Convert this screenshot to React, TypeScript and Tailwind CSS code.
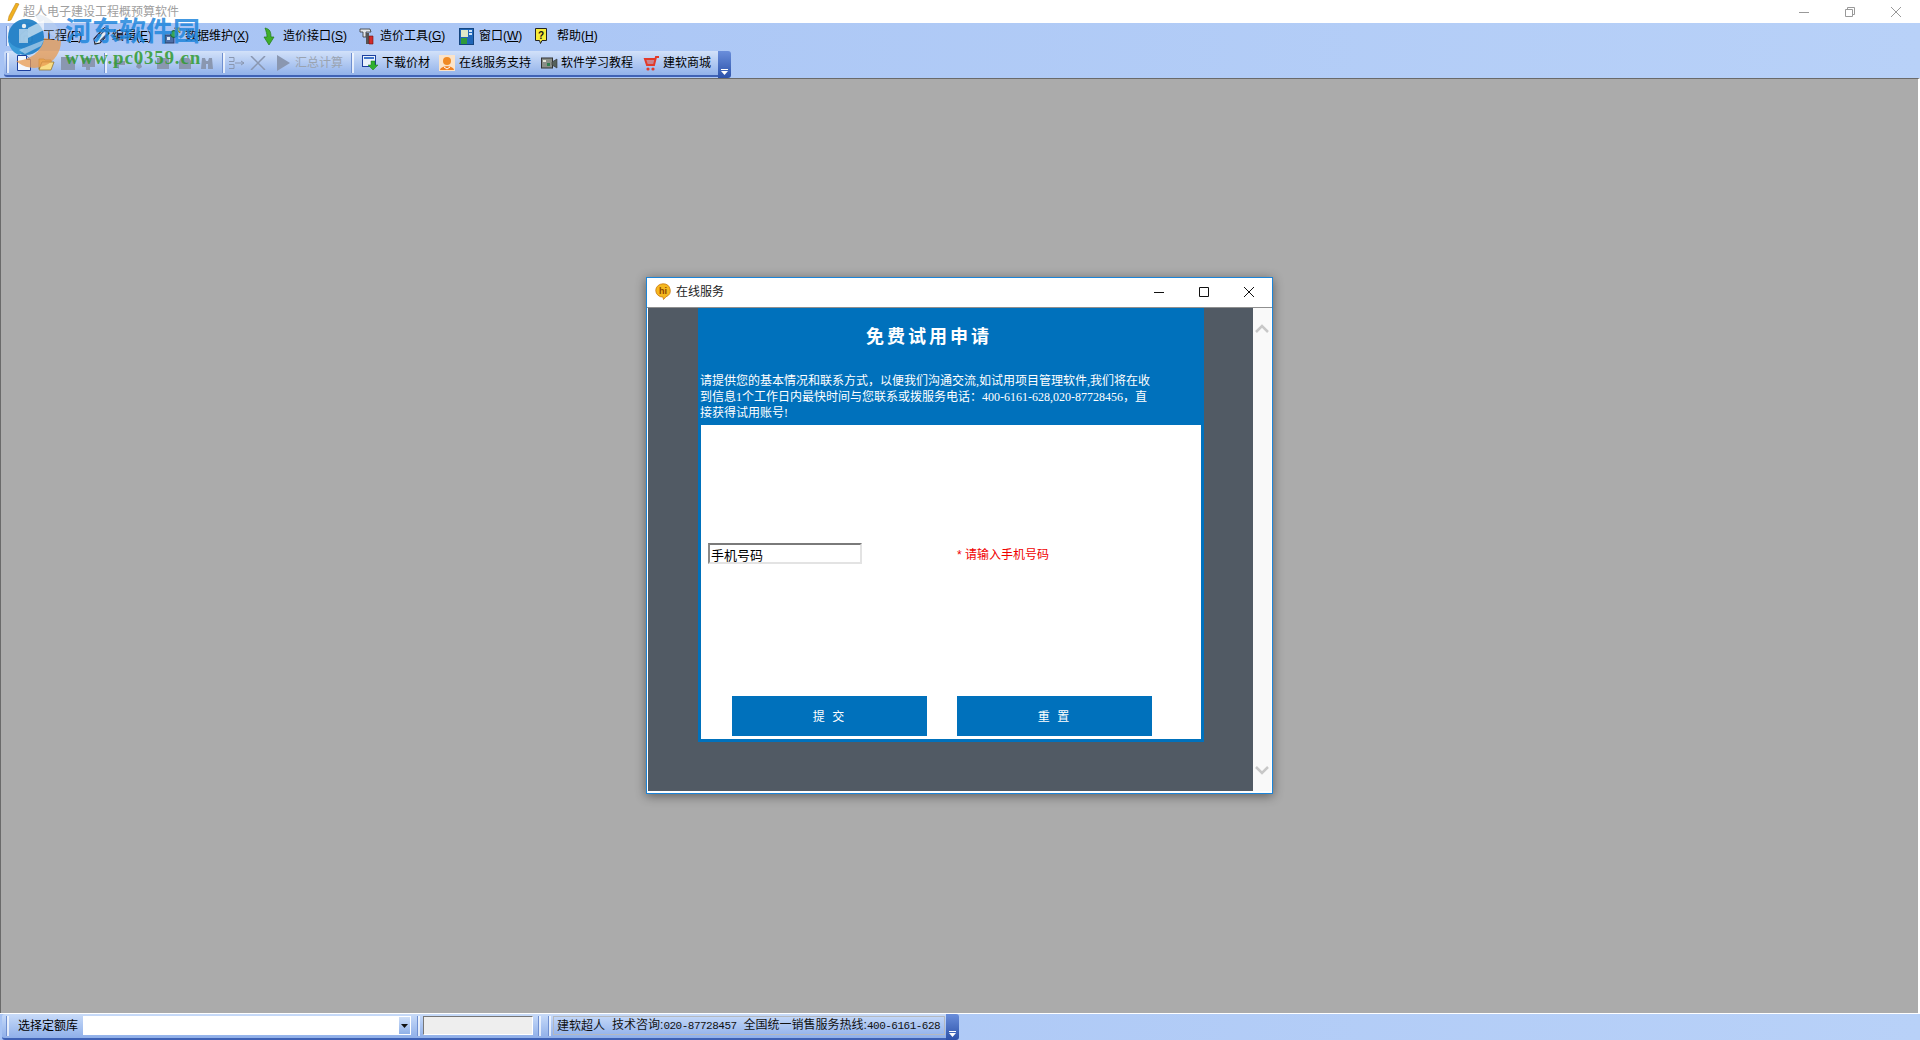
import type { ReactNode } from 'react';

const MENU_W = 'flex items-center h-full shrink-0';

// 메뉴 항목 하나 (아이콘 + 라벨, 단축키 글자에 밑줄)
function MenuItem({ width, gap, icon, label, hot }: { width: string; gap: string; icon: ReactNode; label: string; hot: string }) {
  return (
    <div className={`${MENU_W} ${width}`}>
      <div className={`flex items-center ${gap}`}>{icon}</div>
      <span className="whitespace-nowrap">
        {label}(<span className="underline">{hot}</span>)
      </span>
    </div>
  );
}

function Sep({ className = '' }: { className?: string }) {
  return <div className={`w-[3px] h-[20px] shrink-0 border-l border-[#6f8fd0] bg-white/70 ${className}`} />;
}

function Chevron() {
  return (
    <div className="w-[13px] h-full shrink-0 rounded-r-[3px] bg-gradient-to-b from-[#6a8edb] to-[#2d52aa] flex flex-col items-center justify-end pb-[3px] gap-[1px]">
      <div className="w-[7px] h-[1px] bg-white" />
      <svg width="7" height="4" viewBox="0 0 7 4"><path d="M0 0h7L3.5 4z" fill="#fff" /></svg>
    </div>
  );
}

function IconDoc() {
  return (
    <svg width="18" height="18" viewBox="0 0 18 18">
      <path d="M3 8l6-5 6 5v7H3z" fill="#e6edf5" stroke="#55708f" />
      <path d="M7 9h4v6H7z" fill="#fff" stroke="#7d8ea3" />
    </svg>
  );
}
function IconEdit() {
  return (
    <svg width="20" height="20" viewBox="0 0 20 20">
      <path d="M2 13l9-10 6 4-9 10-5 1z" fill="#e8eef5" stroke="#222" strokeWidth="1.200" />
      <path d="M5 12l7-7M8 15l7-7" stroke="#3c5580" strokeWidth="1.200" />
      <path d="M13 1l5 3-2 2-5-3z" fill="#8aa0c0" stroke="#222" strokeWidth=".7" />
    </svg>
  );
}
function IconData() {
  return (
    <svg width="18" height="18" viewBox="0 0 18 18">
      <rect x="2" y="8" width="9" height="8" fill="#4d6fa8" stroke="#2a3d66" />
      <circle cx="11" cy="7" r="3.500" fill="#3aa655" stroke="#1d5c2e" />
      <path d="M11 1h6v5z" fill="#efc93c" stroke="#6b5a14" strokeWidth=".6" />
      <rect x="4" y="10" width="3" height="3" fill="#d9e6f5" />
    </svg>
  );
}
function IconArrow() {
  return (
    <svg width="14" height="19" viewBox="0 0 14 19">
      <path d="M3 1c5 1 6 4 6 9h3l-5 8-5-8h3c0-3-1-6-2-9z" fill="#3fae2a" stroke="#1f7a18" strokeWidth=".7" />
    </svg>
  );
}
function IconTool() {
  return (
    <svg width="16" height="18" viewBox="0 0 16 18">
      <path d="M1 2h10l1 3H7v5H4V5H1z" fill="#e2e6ea" stroke="#333" strokeWidth=".8" />
      <path d="M7 6h3v11H7z" fill="#555" />
      <path d="M10 9h4v8h-4z" fill="#d22b2b" stroke="#6b1111" strokeWidth=".6" />
    </svg>
  );
}
function IconWindow() {
  return (
    <svg width="15" height="17" viewBox="0 0 15 17">
      <rect x=".5" y=".5" width="14" height="16" fill="#1f66b8" stroke="#14457f" />
      <rect x="2" y="2" width="7" height="7" fill="#dfe9c8" />
      <rect x="2" y="10" width="6" height="6" fill="#2f9a3a" />
      <rect x="10" y="2" width="3" height="2" fill="#cfe3f8" />
      <rect x="10" y="5" width="3" height="2" fill="#cfe3f8" />
    </svg>
  );
}
function IconHelp() {
  return (
    <svg width="12" height="17" viewBox="0 0 12 17">
      <path d="M.5.5h11v12H7l-1.500 3-1-3h-4z" fill="#f6ec3a" stroke="#222" />
      <text x="6" y="10.500" textAnchor="middle" fontSize="10" fontWeight="700" fill="#111" fontFamily="Liberation Sans">?</text>
    </svg>
  );
}

function IconNew() {
  return (
    <svg width="14" height="16" viewBox="0 0 14 16">
      <path d="M.5.5h9l4 4v11H.5z" fill="#f4f8ff" stroke="#1c3f9e" />
      <path d="M9.500.5v4h4" fill="#bcd0f2" stroke="#1c3f9e" />
    </svg>
  );
}
function IconOpen() {
  return (
    <svg width="17" height="15" viewBox="0 0 17 15">
      <path d="M1 3h5l1 1h6v2H4L1 13z" fill="#f3c858" stroke="#8a6a1e" strokeWidth=".7" />
      <path d="M4 6h12l-3 8H1z" fill="#f9dd86" stroke="#8a6a1e" strokeWidth=".7" />
    </svg>
  );
}
function Disabled({ d, w = 14 }: { d: string; w?: number }) {
  return (
    <svg width={w} height="15" viewBox={`0 0 ${w} 15`} className="shrink-0">
      <path d={d} fill="#8a97b0" />
    </svg>
  );
}
function IconDownload() {
  return (
    <svg width="17" height="16" viewBox="0 0 17 16">
      <rect x=".5" y=".5" width="13" height="11" fill="#eaf2fb" stroke="#1c3f9e" />
      <rect x="2" y="2" width="10" height="2" fill="#3f74c9" />
      <path d="M9 6h4v4h3l-5 5-5-5h3z" fill="#2fb02f" stroke="#1a7a1a" strokeWidth=".5" />
    </svg>
  );
}
function IconSupport() {
  return (
    <svg width="16" height="16" viewBox="0 0 16 16">
      <rect width="16" height="16" fill="#fbe3c8" />
      <circle cx="8" cy="6" r="4" fill="#f08a24" />
      <path d="M1 15c1-5 13-5 14 0z" fill="#ef7f1f" />
      <path d="M5 12l3 2 3-2" stroke="#fff" fill="none" />
    </svg>
  );
}
function IconCamera() {
  return (
    <svg width="17" height="13" viewBox="0 0 17 13">
      <rect x=".5" y="1" width="11" height="10" fill="#8a8f88" stroke="#333" />
      <path d="M11 5l5-3v9l-5-3z" fill="#55605a" stroke="#333" strokeWidth=".6" />
      <rect x="2" y="3" width="3" height="2" fill="#e5e5d8" />
      <rect x="6" y="6" width="3" height="3" fill="#2f7f4f" />
    </svg>
  );
}
function IconCart() {
  return (
    <svg width="17" height="15" viewBox="0 0 17 15">
      <path d="M16 1h-3l-2 8H4L2 3h10" fill="none" stroke="#e23a2a" strokeWidth="2" />
      <path d="M3 5h9M4 7h8" stroke="#e23a2a" />
      <circle cx="5" cy="13" r="1.600" fill="#e23a2a" />
      <circle cx="10" cy="13" r="1.600" fill="#e23a2a" />
    </svg>
  );
}

function HiIcon() {
  return (
    <svg width="16" height="17" viewBox="0 0 16 17">
      <path d="M8 .8a7.200 6.800 0 0 1 3 13L8.500 16.500l-.5-2.400a7.200 6.600 0 0 1 0-13.300z" fill="#f5b81f" stroke="#c9780f" strokeWidth=".8" />
      <text x="8" y="10.500" textAnchor="middle" fontSize="9" fontWeight="700" fill="#8a4300" fontFamily="Liberation Sans">hi</text>
    </svg>
  );
}

// 좌상단 워터마크
function Watermark() {
  return (
    <div className="absolute left-0 top-[10px] flex items-start pointer-events-none">
      <svg width="65" height="62" viewBox="0 0 65 62" className="shrink-0">
        <path d="M34 4a27 27 0 0 1 27 27L44 20z" fill="#c9d6e8" opacity=".35" />
        <path d="M44 28l17 3A27 27 0 0 1 16 51C30 50 42 42 44 28z" fill="#e89a4f" opacity=".75" />
        <circle cx="26" cy="27" r="18" fill="#1f7fc4" opacity=".92" />
        <path d="M8 30c4 6 10 9 16 8-1 4-3 6-5 7-6-2-10-8-11-15z" fill="#3a9ad8" />
        <path d="M19 19h9v14h-9z" fill="#ffffff" opacity=".55" />
        <path d="M28 18l16-8v10l-16 8z" fill="#ffffff" opacity=".6" />
        <path d="M19 40l25-10-3 6-16 8z" fill="#ffffff" opacity=".45" />
        <circle cx="24" cy="16" r="2.200" fill="#e8eef3" />
      </svg>
      <div className="flex flex-col pt-[4px]">
        <span className="text-[27px] leading-[32px] font-bold text-[#1f86dc]/85 whitespace-nowrap [font-family:'Noto_Sans_CJK_SC',sans-serif]">
          河东软件园
        </span>
        <span className="mt-[2px] text-[19px] leading-[20px] font-bold tracking-[0.8px] text-[#2f9a2f]/85 whitespace-nowrap [font-family:'Liberation_Serif',serif]">
          www.pc0359.cn
        </span>
      </div>
    </div>
  );
}

function TitleBar() {
  return (
    <div className="h-[23px] shrink-0 bg-white flex items-center pl-[6px]">
      <svg width="14" height="18" viewBox="0 0 14 18" className="shrink-0">
        <path d="M10 0l3 1-8 16-3 1 1-5z" fill="#f0b020" stroke="#b57a10" strokeWidth=".5" />
      </svg>
      <span className="ml-[3px] text-[#a0a0a0]">超人电子建设工程概预算软件</span>
      <div className="ml-auto flex items-center">
        <div className="w-[46px] flex justify-center"><svg width="10" height="10" viewBox="0 0 10 10"><path d="M0 5.500h10" stroke="#999" /></svg></div>
        <div className="w-[46px] flex justify-center"><svg width="10" height="10" viewBox="0 0 10 10" fill="none" stroke="#999"><path d="M.5 2.500h7v7h-7zM2.500 2.500v-2h7v7h-2" /></svg></div>
        <div className="w-[46px] mr-[1px] flex justify-center"><svg width="10" height="10" viewBox="0 0 10 10"><path d="M0 0l10 10M10 0L0 10" stroke="#999" /></svg></div>
      </div>
    </div>
  );
}

function MenuBar() {
  return (
    <div className="h-[28px] shrink-0 flex items-center pl-[6px] pb-[2px] text-black">
      <Sep className="mr-[8px]" />
      <MenuItem width="w-[75px]" gap="w-[26px]" icon={<IconDoc />} label="工程" hot="F" />
      <MenuItem width="w-[71px]" gap="w-[20px]" icon={<IconEdit />} label="编辑" hot="E" />
      <MenuItem width="w-[99px]" gap="w-[22px]" icon={<IconData />} label="数据维护" hot="X" />
      <MenuItem width="w-[97px]" gap="w-[21px]" icon={<IconArrow />} label="造价接口" hot="S" />
      <MenuItem width="w-[100px]" gap="w-[21px]" icon={<IconTool />} label="造价工具" hot="G" />
      <MenuItem width="w-[76px]" gap="w-[20px]" icon={<IconWindow />} label="窗口" hot="W" />
      <MenuItem width="w-[70px]" gap="w-[22px]" icon={<IconHelp />} label="帮助" hot="H" />
    </div>
  );
}

function ToolLabel({ icon, label, width }: { icon: ReactNode; label: string; width: string }) {
  return (
    <div className={`flex items-center shrink-0 ${width}`}>
      <div className="w-[20px] flex items-center">{icon}</div>
      <span className="whitespace-nowrap">{label}</span>
    </div>
  );
}

function ToolBar() {
  return (
    <div className="h-[27px] shrink-0 pl-[4px] flex text-black">
      <div className="w-[714px] h-[26px] rounded-l-[3px] bg-gradient-to-b from-[#d2e1f9] to-[#92b2ea] border-b-2 border-[#3f62b5] flex items-center pl-[2px]">
        <Sep className="mr-[8px]" />
        <IconNew />
        <div className="w-[7px] shrink-0" />
        <IconOpen />
        <div className="w-[5px] shrink-0" />
        <div className="flex items-center gap-[5px] w-[44px] shrink-0 overflow-hidden">
          <Disabled w={16} d="M1 1h12l2 2v11H1z" />
          <Disabled d="M1 2h13v9H9v3H5v-3H1z" />
        </div>
        <Sep className="mr-[2px]" />
        <div className="flex items-center gap-[8px] w-[113px] shrink-0 pl-[3px]">
          <Disabled d="M1 7l6-5v3h6v4H7v4z" />
          <Disabled d="M2 11l3-8 3 8-3 2zM8 13h5" />
          <Disabled d="M1 2h12v11H1z" />
          <Disabled d="M3 2h8l2 3v8H1V5z" />
          <Disabled d="M2 2h3l1 3h2l1-3h3l1 11H8V8H6v5H1z" />
        </div>
        <Sep className="mr-[3px]" />
        <svg width="18" height="14" viewBox="0 0 18 14" className="shrink-0" fill="none" stroke="#8a97b0">
          <path d="M1 1.500h5v4H1M1 8.500h5v4H1M7 7h9M13 5l3 2-3 2" />
        </svg>
        <svg width="16" height="14" viewBox="0 0 16 14" className="ml-[4px] shrink-0"><path d="M1 0l14 14M15 0L1 14" stroke="#8a97b0" strokeWidth="1.500" /></svg>
        <svg width="13" height="16" viewBox="0 0 13 16" className="ml-[11px] shrink-0"><path d="M0 0l13 8-13 8z" fill="#8a97b0" /></svg>
        <span className="ml-[5px] text-[#9aa3b0] whitespace-nowrap">汇总计算</span>
        <Sep className="ml-[8px] mr-[8px]" />
        <ToolLabel width="w-[77px]" icon={<IconDownload />} label="下载价材" />
        <ToolLabel width="w-[102px]" icon={<IconSupport />} label="在线服务支持" />
        <ToolLabel width="w-[102px]" icon={<IconCamera />} label="软件学习教程" />
        <ToolLabel width="w-[70px]" icon={<IconCart />} label="建软商城" />
      </div>
      <Chevron />
    </div>
  );
}

function Dialog() {
  return (
    <div className="absolute left-[645px] top-[198px] w-[627px] h-[517px] flex flex-col bg-white border border-[#1b84d8] shadow-[0_2px_10px_rgba(0,0,0,0.45)]">
      <div className="h-[30px] shrink-0 flex items-center pl-[8px] pb-[2px] border-b border-[#8f8f8f]">
        <HiIcon />
        <span className="ml-[5px] text-[#222]">在线服务</span>
        <div className="ml-auto flex items-center pr-[18px] gap-[35px]">
          <svg width="10" height="10" viewBox="0 0 10 10"><path d="M0 5.500h10" stroke="#111" /></svg>
          <svg width="10" height="10" viewBox="0 0 10 10"><path d="M.5.500h9v9h-9z" fill="none" stroke="#111" /></svg>
          <svg width="10" height="10" viewBox="0 0 10 10"><path d="M0 0l10 10M10 0L0 10" stroke="#111" /></svg>
        </div>
      </div>
      <div className="flex-1 flex min-h-0 pl-[1px] pb-[2px]">
        <div className="flex-1 bg-[#515a64] pl-[50px]">
          <div className="w-[506px] h-[434px] bg-[#0071bc] flex flex-col px-[3px] pb-[3px]">
            <div className="h-[54px] pt-[12px] pr-[44px] text-center text-white text-[18px] leading-[34px] font-bold tracking-[3px] shrink-0">
              免费试用申请
            </div>
            <p className="h-[63px] shrink-0 -ml-[1px] text-white leading-[16px] pt-[11px] pr-[44px] [font-family:'Liberation_Serif','Noto_Sans_CJK_SC',serif]">
              请提供您的基本情况和联系方式，以便我们沟通交流,如试用项目管理软件,我们将在收到信息1个工作日内最快时间与您联系或拨服务电话：400-6161-628,020-87728456，直接获得试用账号!
            </p>
            <div className="flex-1 bg-white flex flex-col">
              <div className="h-[118px] shrink-0" />
              <div className="flex items-start h-[153px] shrink-0 pl-[7px]">
                <div className="w-[154px] h-[21px] border-2 border-[#e3e3e3] border-t-[#7a7a7a] border-l-[#8a8a8a] pl-[1px] text-[13px] leading-[21px] text-black whitespace-nowrap">
                  手机号码
                </div>
                <span className="ml-[95px] text-[#f00000] leading-[24px] whitespace-nowrap">* 请输入手机号码</span>
              </div>
              <div className="flex pl-[31px] gap-[30px]">
                <button className="w-[195px] h-[40px] pt-[1px] bg-[#0071bc] text-white tracking-[2px]">提 交</button>
                <button className="w-[195px] h-[40px] pt-[1px] bg-[#0071bc] text-white tracking-[2px]">重 置</button>
              </div>
            </div>
          </div>
        </div>
        <div className="w-[18px] shrink-0 mr-[1px] bg-[#f9f9f9] flex flex-col items-center justify-between py-[16px]">
          <svg width="14" height="10" viewBox="0 0 14 10"><path d="M1 8l6-6 6 6" fill="none" stroke="#c8c8c8" strokeWidth="2.500" /></svg>
          <svg width="14" height="10" viewBox="0 0 14 10"><path d="M1 2l6 6 6-6" fill="none" stroke="#c8c8c8" strokeWidth="2.500" /></svg>
        </div>
      </div>
    </div>
  );
}

function StatusBar() {
  return (
    <div className="h-[27px] shrink-0 border-t border-white flex pl-[2px] text-black">
      <div className="w-[944px] h-[26px] rounded-l-[3px] bg-gradient-to-b from-[#c8dbf9] to-[#8fafe9] border-b-2 border-[#3f62b5] flex items-center pl-[4px] pb-[1px]">
        <Sep className="mr-[9px]" />
        <span className="whitespace-nowrap">选择定额库</span>
        <div className="ml-[5px] w-[328px] h-[19px] bg-white flex justify-end items-center pr-[1px]">
          <div className="w-[11px] h-[17px] bg-gradient-to-b from-[#cfdff8] to-[#8fb0e8] flex items-center justify-center">
            <svg width="7" height="4" viewBox="0 0 7 4"><path d="M0 0h7L3.500 4z" fill="#111" /></svg>
          </div>
        </div>
        <Sep className="ml-[6px] mr-[3px]" />
        <div className="w-[110px] h-[19px] bg-[#eeeeee] border border-[#fff] border-t-[#777] border-l-[#777]" />
        <Sep className="ml-[5px]" />
        <Sep className="ml-[7px] mr-[2px]" />
        <div className="w-[392px] h-[19px] border border-[#b4b9c0] flex items-center pl-[3px] whitespace-nowrap overflow-hidden text-[#111]">
          <span>建软超人</span>
          <span className="ml-[7px]">技术咨询:<span className="text-[11px] tracking-[-0.5px] [font-family:'Liberation_Mono',monospace]">020-87728457</span></span>
          <span className="ml-[7px]">全国统一销售服务热线:<span className="text-[11px] tracking-[-0.5px] [font-family:'Liberation_Mono',monospace]">400-6161-628</span></span>
        </div>
      </div>
      <Chevron />
    </div>
  );
}

export default function App() {
  return (
    <div className="relative w-[1920px] h-[1040px] overflow-hidden flex flex-col text-[12px] bg-gradient-to-r from-[#a7c3f4] to-[#b8d1f8] [font-family:'Liberation_Sans','Noto_Sans_CJK_SC',sans-serif]">
      <TitleBar />
      <MenuBar />
      <ToolBar />
      <div className="relative flex-1 min-h-0 bg-[#ababab] border-t border-l border-[#6a6a6a] border-r-2 border-r-white">
        <Dialog />
      </div>
      <StatusBar />
      <Watermark />
    </div>
  );
}
